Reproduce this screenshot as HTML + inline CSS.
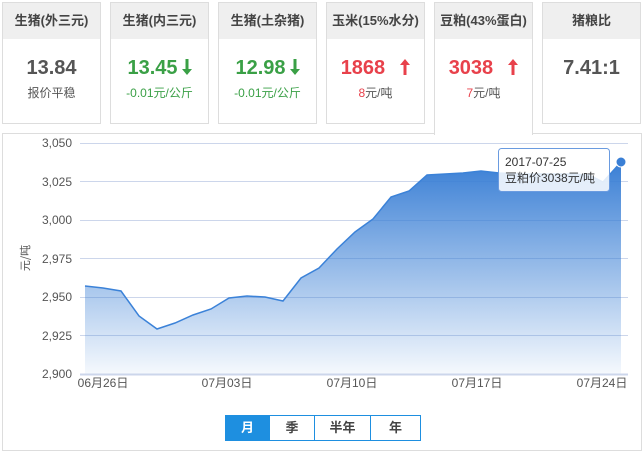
<!DOCTYPE html>
<html><head><meta charset="utf-8"><style>
body{margin:0;width:644px;height:452px;background:#fff;font-family:"Liberation Sans","Noto Sans CJK SC",sans-serif;position:relative;overflow:hidden}
.c{position:absolute;top:2px;height:122px;border:1px solid #ddd;box-sizing:border-box;background:#fff;text-align:center}
.c .h{height:36px;background:#efefef;line-height:36px;font-size:13px;font-weight:bold;color:#444}
.c .v{margin-top:16px;font-size:20px;font-weight:bold;color:#555;height:26px;line-height:26px}
.c .s{font-size:12px;color:#555;margin-top:3px}
.g{color:#3aa046!important}.r{color:#e8414b!important}
.v svg{vertical-align:-1px;margin-left:4px}
.panel{position:absolute;left:2px;top:133px;width:640px;height:318px;border:1px solid #ddd;box-sizing:border-box}
.btns{position:absolute;top:415px;left:225px;height:26px;display:flex;border:1px solid #1e8fe0;box-sizing:border-box}
.btns div{height:24px;line-height:24px;text-align:center;font-size:13px;font-weight:bold;color:#444;border-left:1px solid #1e8fe0}
</style></head><body>
<div class="panel"></div>
<div class="c" style="left:2px;width:99px"><div class="h">生猪(外三元)</div><div class="v">13.84</div><div class="s">报价平稳</div></div>
<div class="c" style="left:110px;width:99px"><div class="h">生猪(内三元)</div><div class="v g">13.45<svg width="10" height="16" viewBox="0 0 10 16"><path d="M3.5,0h3v10h3.5L5,16L0,10h3.5z" fill="#3aa046"/></svg></div><div class="s g">-0.01元/公斤</div></div>
<div class="c" style="left:218px;width:99px"><div class="h">生猪(土杂猪)</div><div class="v g">12.98<svg width="10" height="16" viewBox="0 0 10 16"><path d="M3.5,0h3v10h3.5L5,16L0,10h3.5z" fill="#3aa046"/></svg></div><div class="s g">-0.01元/公斤</div></div>
<div class="c" style="left:326px;width:99px"><div class="h">玉米(15%水分)</div><div class="v r">1868 &nbsp;<svg width="10" height="16" viewBox="0 0 10 16"><path d="M3.5,16h3V6h3.5L5,0L0,6h3.5z" fill="#e8414b"/></svg></div><div class="s"><span class="r">8</span>元/吨</div></div>
<div class="c" style="left:434px;width:99px;height:133px;border-bottom:none;z-index:2"><div class="h">豆粕(43%蛋白)</div><div class="v r">3038 &nbsp;<svg width="10" height="16" viewBox="0 0 10 16"><path d="M3.5,16h3V6h3.5L5,0L0,6h3.5z" fill="#e8414b"/></svg></div><div class="s"><span class="r">7</span>元/吨</div></div>
<div class="c" style="left:542px;width:99px"><div class="h">猪粮比</div><div class="v">7.41:1</div></div>
<svg style="position:absolute;left:0;top:0" width="644" height="452">
<defs><linearGradient id="gr" x1="0" y1="0" x2="0" y2="1"><stop offset="0" stop-color="#3a7fd5"/><stop offset="1" stop-color="#3a7fd5" stop-opacity="0.05"/></linearGradient></defs>
<g stroke="#ccd6eb" stroke-width="1">
<line x1="80" x2="628" y1="143.5" y2="143.5"/><line x1="80" x2="628" y1="181.5" y2="181.5"/><line x1="80" x2="628" y1="220.5" y2="220.5"/><line x1="80" x2="628" y1="258.5" y2="258.5"/><line x1="80" x2="628" y1="297.5" y2="297.5"/><line x1="80" x2="628" y1="335.5" y2="335.5"/></g>
<path d="M85,286 L103,288 L121,291 L139,316 L157,329 L175,323 L193,315 L211,309 L229,298 L247,296 L265,297 L283,301 L301,278 L319,268 L337,249 L355,232 L373,219 L391,197 L409,191 L427,175 L445,174 L463,173 L481,171 L499,173 L517,174 L535,174 L553,174 L571,174 L589,175 L603,182 L621,162 L621,374 L85,374Z" fill="url(#gr)"/>
<path d="M85,286 L103,288 L121,291 L139,316 L157,329 L175,323 L193,315 L211,309 L229,298 L247,296 L265,297 L283,301 L301,278 L319,268 L337,249 L355,232 L373,219 L391,197 L409,191 L427,175 L445,174 L463,173 L481,171 L499,173 L517,174 L535,174 L553,174 L571,174 L589,175 L603,182 L621,162" fill="none" stroke="#3b82d8" stroke-width="1.5"/>
<line x1="80" x2="628" y1="374.5" y2="374.5" stroke="#ccd6eb" stroke-width="2"/>
<g font-size="12" fill="#555" text-anchor="end" font-family="Liberation Sans,sans-serif">
<text x="72" y="147">3,050</text><text x="72" y="186">3,025</text><text x="72" y="224">3,000</text><text x="72" y="263">2,975</text><text x="72" y="301">2,950</text><text x="72" y="340">2,925</text><text x="72" y="378">2,900</text></g>
<g font-size="12" fill="#555" text-anchor="middle" font-family="Liberation Sans,Noto Sans CJK SC,sans-serif">
<text x="103" y="387">06月26日</text><text x="227" y="387">07月03日</text><text x="352" y="387">07月10日</text><text x="477" y="387">07月17日</text><text x="602" y="387">07月24日</text></g>
<text transform="translate(29,258) rotate(-90)" font-size="11" fill="#555" text-anchor="middle" font-family="Noto Sans CJK SC,sans-serif">元/吨</text>
<rect x="498.5" y="148.5" width="111" height="43" rx="3" fill="#fff" fill-opacity="0.85" stroke="#6a9be0"/>
<text x="505" y="166" font-size="12" fill="#333" font-family="Liberation Sans,Noto Sans CJK SC,sans-serif">2017-07-25</text>
<text x="505" y="182" font-size="12" fill="#333" font-family="Liberation Sans,Noto Sans CJK SC,sans-serif">豆粕价3038元/吨</text>
<circle cx="621" cy="162" r="5" fill="#3a7fd5" stroke="#fff" stroke-width="1"/>
</svg>
<div class="btns"><div style="width:43px;background:#1e8fe0;color:#fff;border:none">月</div><div style="width:44px">季</div><div style="width:55px">半年</div><div style="width:49px">年</div></div>
</body></html>
